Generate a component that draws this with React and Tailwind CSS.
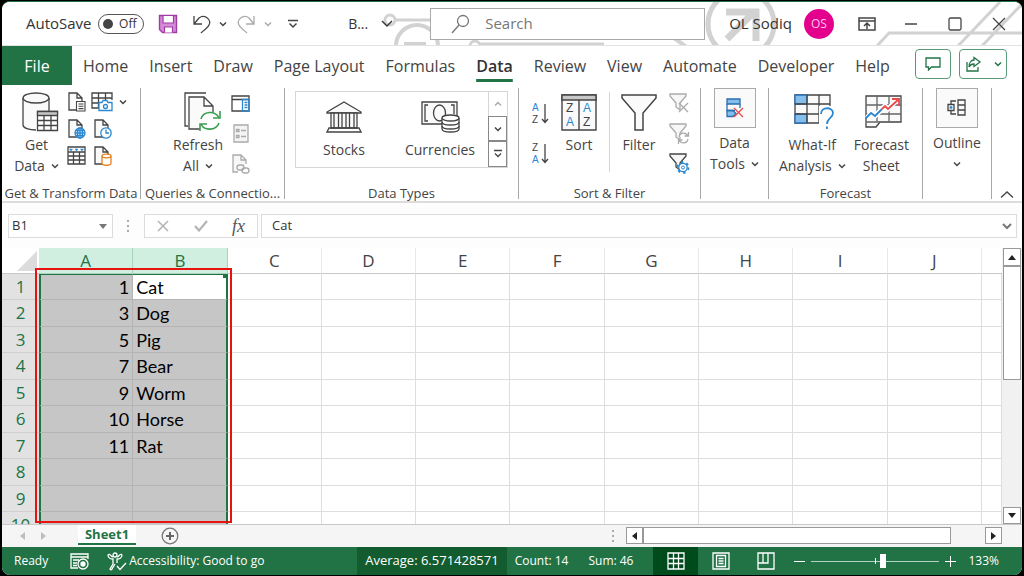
import React, { useState } from 'react';

const COLUMNS = ['A', 'B', 'C', 'D', 'E', 'F', 'G', 'H', 'I', 'J'];

const ROWS = [
  ['1', 'Cat'],
  ['3', 'Dog'],
  ['5', 'Pig'],
  ['7', 'Bear'],
  ['9', 'Worm'],
  ['10', 'Horse'],
  ['11', 'Rat'],
  ['', ''],
  ['', ''],
  ['', ''],
];

const TABS = ['Home', 'Insert', 'Draw', 'Page Layout', 'Formulas', 'Data', 'Review', 'View', 'Automate', 'Developer', 'Help'];

const Icon = ({ w, h, className = '', children }) => (
  <svg
    width={w}
    height={h}
    viewBox={`0 0 ${w} ${h}`}
    fill="none"
    stroke="#444"
    strokeWidth="1.3"
    className={`shrink-0 ${className}`}
    aria-hidden="true"
  >
    {children}
  </svg>
);

const Chevron = ({ color = '#444', className = '' }) => (
  <svg width="8" height="8" viewBox="0 0 8 8" fill="none" stroke={color} strokeWidth="1.5" className={`shrink-0 ${className}`} aria-hidden="true">
    <path d="M1 2.5l3 3 3-3" />
  </svg>
);

// small page outline shared by the import icons
const Page = () => <path d="M12 18H2V1h8l5 5v3M10 1v5h5" fill="#fafafa" />;

/* ---------- title bar ---------- */

const TitleArt = () => (
  <svg width="1020" height="43" viewBox="0 0 1020 43" fill="none" stroke="#d2d2d2" strokeWidth="3" className="absolute right-0 top-0" aria-hidden="true">
    <circle cx="388" cy="18" r="5" />
    <path d="M393 18h50" />
    <path d="M394 44a21 21 0 0 1 42 0M402 42h22" strokeWidth="4" />
    <path d="M468 44a5 5 0 0 1 10 0M478 42h124" />
    <path d="M672 36l14 10" strokeWidth="4" />
    <circle cx="739" cy="22" r="33" strokeWidth="5" />
    <path d="M725 37l27-27M724 10h30v29" strokeWidth="7" />
    <path d="M875 44l12-13h133M956 44l42-44M980 44l40-42" />
  </svg>
);

const TitleBar = () => {
  const [autoSave, setAutoSave] = useState(false);

  return (
    <header className="relative flex h-11 shrink-0 items-center overflow-hidden border-b border-[#e3e3e3] bg-white text-[15px] text-[#333]">
      <TitleArt />
      <div className="relative flex flex-1 items-center pl-6">
        <span id="autosave">AutoSave</span>
        <button
          role="switch"
          aria-checked={autoSave}
          aria-labelledby="autosave"
          onClick={() => setAutoSave(!autoSave)}
          className="ml-1.5 flex h-5 w-[46px] items-center justify-between rounded-full border border-[#555] pl-1 pr-1.5 text-[12px]"
        >
          <span className="size-2.5 rounded-full bg-[#444]" />
          {autoSave ? 'On' : 'Off'}
        </button>
        <button aria-label="Save" className="ml-3.5">
          <Icon w={20} h={20}>
            <path d="M1.500 1.500h17v17h-14l-3-3z" fill="#d58bd8" stroke="#a13ca6" strokeWidth="1.400" />
            <path d="M5 1.500h10.500v7.500H5zM6.500 18.500v-5.500h8v5.500" fill="#fff" stroke="#a13ca6" strokeWidth="1.200" />
          </Icon>
        </button>
        <button aria-label="Undo" className="ml-3.5 flex items-center gap-2">
          <Icon w={19} h={20}>
            <path d="M2 2v8h8M2 10l5-6c5-4 13 1 10 7-1 3-4 4-8 8" />
          </Icon>
          <Chevron />
        </button>
        <button aria-label="Redo" className="ml-2.5 flex items-center gap-2">
          <Icon w={19} h={20}>
            <path d="M17 2v8H9M17 10l-5-6C7 0-1 5 2 11c1 3 4 4 8 8" stroke="#aaa" />
          </Icon>
          <Chevron color="#aaa" />
        </button>
        <button aria-label="Customize Quick Access Toolbar" className="ml-4">
          <Icon w={10} h={10}>
            <path d="M0 1.500h10M1.500 4.500L5 8l3.500-3.500" strokeWidth="1.500" />
          </Icon>
        </button>
        <button className="ml-auto mr-9 flex items-center gap-3 text-[14px]">
          B...
          <Icon w={14} h={10}>
            <path d="M2 2l5 5 5-5" stroke="#333" strokeWidth="1.400" />
          </Icon>
        </button>
      </div>
      <label className="relative flex h-8 w-[275px] items-center border border-[#aaa] bg-white pl-5">
        <Icon w={20} h={20} className="mr-3.5">
          <circle cx="12" cy="7" r="5.500" stroke="#777" />
          <path d="M8 11l-7 8" stroke="#777" />
        </Icon>
        <input aria-label="Search" placeholder="Search" className="min-w-0 flex-1 bg-transparent outline-none placeholder:text-[#777]" />
      </label>
      <div className="relative flex items-center pl-6">
        <span className="whitespace-nowrap">OL Sodiq</span>
        <span className="ml-3 flex size-[30px] items-center justify-center rounded-full bg-[#e3008c] text-[12px] text-[#ffc4e8]">OS</span>
        <button aria-label="Ribbon Display Options" className="ml-6">
          <Icon w={18} h={14}>
            <path d="M1 1h16v12H1zM1 4h16M9 12V6M6 9l3-3 3 3" strokeWidth="1.500" />
          </Icon>
        </button>
        <button aria-label="Minimize" className="ml-7">
          <Icon w={14} h={14}>
            <path d="M1 7h12" />
          </Icon>
        </button>
        <button aria-label="Maximize" className="ml-[30px]">
          <Icon w={14} h={14}>
            <rect x="1" y="1" width="12" height="12" rx="1.500" />
          </Icon>
        </button>
        <button aria-label="Close" className="ml-[30px] mr-4">
          <Icon w={14} h={14}>
            <path d="M1 1l12 12M13 1L1 13" />
          </Icon>
        </button>
      </div>
    </header>
  );
};

/* ---------- tabs ---------- */

const TabBar = () => (
  <nav className="flex h-[39px] shrink-0 items-stretch bg-white text-[16px] text-[#444]">
    <button className="w-[70px] bg-[#217346] text-white">File</button>
    <div className="flex flex-1 gap-[21px] pl-[11px]">
      {TABS.map((tab) => (
        <button
          key={tab}
          className={
            tab === 'Data'
              ? 'flex flex-col justify-center whitespace-nowrap font-semibold text-[#333] underline decoration-[#217346] decoration-[3px] underline-offset-[7px]'
              : 'flex flex-col justify-center whitespace-nowrap'
          }
        >
          {tab}
        </button>
      ))}
    </div>
    <div className="flex items-center gap-2 pb-1 pr-[15px]">
      <button aria-label="Comments" className="flex h-[30px] w-9 items-center justify-center rounded border border-[#5b9a78]">
        <Icon w={16} h={14}>
          <path d="M1 1h14v9H6.500L3.500 13v-3H1z" stroke="#217346" />
        </Icon>
      </button>
      <button aria-label="Share" className="flex h-[30px] w-12 items-center justify-center gap-3 rounded border border-[#5b9a78]">
        <Icon w={17} h={16}>
          <path d="M2 6v9h11v-4M9 1.500l6 4.500-6 4.500V8C6.500 8 5 9 4 11c0-4 2-7 5-7z" stroke="#217346" />
        </Icon>
        <Chevron color="#217346" />
      </button>
    </div>
  </nav>
);

/* ---------- ribbon ---------- */

const Group = ({ label, className, children }) => (
  <section className={`flex shrink-0 flex-col border-r border-[#a8a8a8] ${className}`}>
    <div className="flex flex-1 items-start">{children}</div>
    <div className="h-3 whitespace-nowrap text-center text-[13px] leading-3">{label}</div>
  </section>
);

const BigButton = ({ icon, lines, menu, className = '' }) => (
  <button className={`flex flex-col items-center text-[14px] leading-[21px] ${className}`}>
    <span className="mb-0.5 flex h-10 items-center">{icon}</span>
    {lines.map((line, i) => (
      <span key={line} className="flex items-center gap-1.5 whitespace-nowrap">
        {line}
        {menu && i === lines.length - 1 && <Chevron />}
      </span>
    ))}
  </button>
);

const SmallButton = ({ label, children }) => (
  <button aria-label={label} className="flex h-[27px] items-center justify-center">
    {children}
  </button>
);

const GetDataIcon = () => (
  <Icon w={37} h={40} className="ml-2">
    <path d="M1 6v27c0 3 6 5 13 5V20h13V6z" fill="#fafafa" stroke="none" />
    <path d="M1 6v27c0 3 6 5 13 5M27 6v13" />
    <ellipse cx="14" cy="6" rx="13" ry="5" fill="#fafafa" />
    <path d="M15.500 19.500h20v19h-20z" fill="#fff" />
    <path d="M15.500 19.500h20v4h-20z" fill="#c8c8c8" />
    <path d="M15.500 28.500h20M15.500 33.500h20M22 24v15M29 24v15" />
  </Icon>
);

const RefreshIcon = () => (
  <Icon w={37} h={40} className="ml-2">
    <path d="M4 34H1V1h21" />
    <path d="M17 37H5V5h15l9 9v7M20 5v9h9" fill="#fafafa" />
    <path d="M16 20h20v19H16z" fill="#fff" stroke="none" />
    <g stroke="#3a9e50" strokeWidth="1.600">
      <path d="M17 27c2-8 14-9 18-1M35 31c-3 8-15 8-18 1" />
      <path d="M36 19v7h-7M16 39v-7h7" />
    </g>
  </Icon>
);

const TransformGroup = () => (
  <Group label="Get & Transform Data" className="w-[139px]">
    <BigButton icon={<GetDataIcon />} lines={['Get', 'Data']} menu className="ml-3 mt-1" />
    <div className="ml-2 grid grid-cols-[18px_22px_8px] gap-x-1.5">
      <SmallButton label="From Text/CSV">
        <Icon w={19} h={20}>
          <Page />
          <path d="M9.500 9.500h8.500v9.500H9.500zM11.500 12h5M11.500 14.300h5M11.500 16.600h5" fill="#fff" strokeWidth="1.100" />
        </Icon>
      </SmallButton>
      <SmallButton label="From Picture">
        <Icon w={22} h={20}>
          <path d="M8 16H1V1h20v7M1 6h20M1 11h7M7.500 1v15M14.500 1v7" />
          <path d="M8 10.500h3l1-2h4l1 2h4v8H8z" fill="#fff" stroke="#2b88d0" />
          <circle cx="14.500" cy="14.500" r="2" stroke="#2b88d0" />
        </Icon>
      </SmallButton>
      <SmallButton label="Picture options">
        <Chevron />
      </SmallButton>
      <SmallButton label="From Web">
        <Icon w={19} h={20}>
          <Page />
          <g stroke="#2b88d0">
            <circle cx="13" cy="14" r="5" fill="#fff" />
            <path d="M8 14h10M13 9v10M9 11.500h8M9 16.500h8" />
            <ellipse cx="13" cy="14" rx="2.500" ry="5" />
          </g>
        </Icon>
      </SmallButton>
      <SmallButton label="Recent Sources">
        <Icon w={19} h={20}>
          <Page />
          <circle cx="13" cy="14" r="5.200" fill="#fff" stroke="#2b88d0" />
          <path d="M13 10.500V14h3" stroke="#2b88d0" />
        </Icon>
      </SmallButton>
      <span />
      <SmallButton label="From Table/Range">
        <Icon w={19} h={19}>
          <path d="M1 1h17v17H1zM1 6h17M1 10h17M1 14h17M6.500 6v12M12.500 6v12" />
          <path d="M2.500 3h3l-1.500 2zM8 3h3L9.500 5zM13.500 3h3L15 5z" fill="#2b88d0" stroke="#2b88d0" strokeWidth=".5" />
        </Icon>
      </SmallButton>
      <SmallButton label="Existing Connections">
        <Icon w={19} h={20}>
          <Page />
          <path d="M9 10v7c0 3 9 3 9 0v-7" fill="#fff" stroke="#e8801c" />
          <ellipse cx="13.500" cy="10" rx="4.500" ry="1.800" fill="#fff" stroke="#e8801c" />
        </Icon>
      </SmallButton>
    </div>
  </Group>
);

const QueriesGroup = () => (
  <Group label="Queries & Connectio..." className="w-[144px]">
    <BigButton icon={<RefreshIcon />} lines={['Refresh', 'All']} menu className="ml-8 mt-1" />
    <div className="ml-2 mt-0.5 flex flex-col gap-[3px]">
      <SmallButton label="Queries & Connections">
        <Icon w={19} h={17}>
          <path d="M1 1h17v15H1zM1 4.500h17" />
          <path d="M11.500 4.500H18V16h-6.500zM13.500 7.500h3M13.500 10h3M13.500 12.500h3" stroke="#2b88d0" />
        </Icon>
      </SmallButton>
      <SmallButton label="Properties">
        <Icon w={16} h={19}>
          <path d="M1 1h14v17H1zM3.500 5.500h2.500v2H3.500zM3.500 11.500h2.500v2H3.500zM8 6.500h5M8 12.500h5" fill="#f4f4f4" stroke="#aaa" />
        </Icon>
      </SmallButton>
      <SmallButton label="Edit Links">
        <Icon w={19} h={20}>
          <path d="M7 18H2V1h8l5 5v4M10 1v5h5" fill="#f7f7f7" stroke="#aaa" />
          <rect x="6" y="11" width="7" height="5" rx="2.500" stroke="#aaa" />
          <rect x="11" y="14" width="7" height="5" rx="2.500" stroke="#aaa" />
        </Icon>
      </SmallButton>
    </div>
  </Group>
);

const TypesGroup = () => (
  <Group label="Data Types" className="w-[234px]">
    <div className="ml-2.5 mt-[3px] flex h-[77px] w-[213px] border border-[#d6d6d6]">
      <div className="flex flex-1 items-center justify-around pb-0.5">
        <BigButton
          icon={
            <Icon w={36} h={32}>
              <path d="M1 11L18 1l17 10v1H1z" fill="#fafafa" />
              <path d="M5 12h26v15H5z" fill="#fafafa" />
              <path d="M8 12v15M12.500 12v15M16 12v15M20 12v15M23.500 12v15M28 12v15M3 27h30l2 4H1z" />
            </Icon>
          }
          lines={['Stocks']}
          className="w-20"
        />
        <BigButton
          icon={
            <Icon w={39} h={34}>
              <path d="M1 2h35v22H1z" fill="#fafafa" />
              <path d="M7 5H4v16h3M30 5h3v9" />
              <ellipse cx="18.500" cy="13" rx="6" ry="8" />
              <path d="M21 18v11c0 4 17 4 17 0V18" fill="#fff" />
              <path d="M21 22c0 4 17 4 17 0M21 26c0 4 17 4 17 0" />
              <ellipse cx="29.500" cy="18" rx="8.500" ry="3" fill="#fff" />
            </Icon>
          }
          lines={['Currencies']}
          className="w-20"
        />
      </div>
      <div className="flex w-[19px] flex-col">
        <button aria-label="Previous row" className="flex flex-1 items-center justify-center border-l border-[#d6d6d6]">
          <Chevron color="#aaa" className="rotate-180" />
        </button>
        <button aria-label="Next row" className="flex flex-1 items-center justify-center border border-[#888]">
          <Chevron />
        </button>
        <button aria-label="More data types" className="flex flex-1 items-center justify-center border border-[#888]">
          <Icon w={10} h={10}>
            <path d="M1 1.500h8M2 4.500l3 3 3-3" />
          </Icon>
        </button>
      </div>
    </div>
  </Group>
);

const SortLetters = ({ top, bottom, topColor, bottomColor }) => (
  <svg width="19" height="24" viewBox="0 0 19 24" fontFamily="Liberation Sans, sans-serif" fontSize="10" className="overflow-visible" aria-hidden="true">
    <text x="1" y="9" fill={topColor}>{top}</text>
    <text x="1" y="21" fill={bottomColor}>{bottom}</text>
    <path d="M14 2v18M11 17l3 3.500 3-3.500" fill="none" stroke="#444" strokeWidth="1.300" />
  </svg>
);

const Funnel = () => <path d="M1 1h16v2l-6 7v7l-4-3v-4L1 3z" fill="#f7f7f7" />;

const SortGroup = () => (
  <Group label="Sort & Filter" className="w-[182px]">
    <div className="ml-3 mt-3.5 flex flex-col gap-4">
      <button aria-label="Sort A to Z">
        <SortLetters top="A" bottom="Z" topColor="#2b88d0" bottomColor="#444" />
      </button>
      <button aria-label="Sort Z to A">
        <SortLetters top="Z" bottom="A" topColor="#444" bottomColor="#2b88d0" />
      </button>
    </div>
    <BigButton
      icon={
        <svg width="36" height="37" viewBox="0 0 36 37" fontFamily="Liberation Sans, sans-serif" fontSize="12" fill="none" stroke="#444" strokeWidth="1.400" aria-hidden="true">
          <path d="M1 1h34v35H1z" fill="#fafafa" />
          <path d="M1 1h34v5H1z" fill="#c8c8c8" />
          <path d="M18 6v30" />
          <g stroke="none">
            <text x="5" y="18" fill="#444">Z</text>
            <text x="5" y="32" fill="#2b88d0">A</text>
            <text x="22" y="18" fill="#2b88d0">A</text>
            <text x="22" y="32" fill="#444">Z</text>
          </g>
        </svg>
      }
      lines={['Sort']}
      className="ml-[11px] mt-1"
    />
    <div className="ml-3 mt-1 h-20 w-px bg-[#d6d6d6]" />
    <BigButton
      icon={
        <Icon w={36} h={37}>
          <path d="M1 1h34v3L22 19v17h-8V19L1 4z" fill="#fafafa" strokeWidth="1.500" />
        </Icon>
      }
      lines={['Filter']}
      className="ml-[11px] mt-1"
    />
    <div className="ml-3 mt-0.5 flex flex-col gap-[3px]">
      <SmallButton label="Clear">
        <Icon w={21} h={21}>
          <g stroke="#aaa">
            <Funnel />
            <path d="M10 10l9 9M19 10l-9 9" />
          </g>
        </Icon>
      </SmallButton>
      <SmallButton label="Reapply">
        <Icon w={21} h={21}>
          <g stroke="#aaa">
            <Funnel />
            <path d="M10 14c1-5 7-5 9-1M19 16c-1 5-7 5-9 1M19.500 9v4h-4M9.500 21v-4h4" fill="#fff" />
          </g>
        </Icon>
      </SmallButton>
      <SmallButton label="Advanced">
        <Icon w={21} h={21}>
          <Funnel />
          <circle cx="14" cy="14.500" r="4.200" fill="#fff" stroke="#2b88d0" />
          <circle cx="14" cy="14.500" r="5.500" stroke="#2b88d0" strokeWidth="1.800" strokeDasharray="2.400 3.360" />
          <circle cx="14" cy="14.500" r="1.500" stroke="#2b88d0" strokeWidth="1" />
        </Icon>
      </SmallButton>
    </div>
  </Group>
);

const BoxedButton = ({ icon, children }) => (
  <button className="flex w-full flex-col items-center text-[14px] leading-[21px]">
    <span className="mb-1 flex h-10 w-[42px] items-center justify-center border border-[#aaa] bg-[#fafafa]">{icon}</span>
    {children}
  </button>
);

const Ribbon = () => (
  <div className="flex h-[118px] shrink-0 border-b-2 border-[#dcdcdc] bg-white pb-0.5 pt-[3px] text-[#444]">
    <TransformGroup />
    <QueriesGroup />
    <TypesGroup />
    <SortGroup />
    <Group label="" className="w-[68px]">
      <BoxedButton
        icon={
          <Icon w={18} h={20}>
            <path d="M1 1h13v5H1zM1 12.500h6l3 3-3 3H1z" fill="#83beec" stroke="#2b6fb0" />
            <path d="M1 6v6.500h8M14 6v4" stroke="#2b6fb0" />
            <path d="M8 10l9 9M17 10l-9 9" stroke="#e84a4a" />
          </Icon>
        }
      >
        <span>Data</span>
        <span className="flex items-center gap-1.5">
          Tools <Chevron />
        </span>
      </BoxedButton>
    </Group>
    <Group label="Forecast" className="w-[154px]">
      <BigButton
        icon={
          <Icon w={40} h={36} className="ml-1">
            <path d="M1 1h35v28H1z" fill="#fafafa" />
            <path d="M1 1h12v9H1zM1 20h12v9H1z" fill="#83beec" stroke="#2b6fb0" />
            <path d="M13 1v28M25 1v28M1 10h35M1 20h35" />
            <path d="M25 12h15v24H25z" fill="#fff" stroke="none" />
            <path d="M27 20c0-8 12-7 12-1 0 5-6 5-6 11M33 32.500v2.500" stroke="#2b88d0" strokeWidth="1.800" />
          </Icon>
        }
        lines={['What-If', 'Analysis']}
        menu
        className="ml-2.5 mt-1"
      />
      <BigButton
        icon={
          <Icon w={37} h={34} className="ml-1">
            <path d="M1 1h35v26H15l-4 5H1z" fill="#fafafa" />
            <path d="M1 27h14M1 10h35M1 19h35M12 1v26M24 1v26" stroke="#666" />
            <path d="M2 23l4-5 4 3 7-7M17 14l3-3 3 3 10-10" stroke="#fff" strokeWidth="5" />
            <path d="M1 23l5-5 4 3 7-7" stroke="#2b88d0" strokeWidth="1.800" />
            <path d="M17 14l3-3 3 3L34 4M27 4h7v7" stroke="#e84a4a" strokeWidth="1.800" />
          </Icon>
        }
        lines={['Forecast', 'Sheet']}
        className="ml-2 mt-1"
      />
    </Group>
    <Group label="" className="w-[69px]">
      <BoxedButton
        icon={
          <Icon w={20} h={18}>
            <path d="M11 1h7v15h-7zM11 6h7M11 11h7M9 2H4v3M9 15H4v-3" />
            <path d="M1 5.500h6v6H1z" />
            <path d="M4 7v3M2.500 8.500h3" stroke="#2b88d0" />
          </Icon>
        }
      >
        <span>Outline</span>
        <span className="flex h-[21px] items-center">
          <Chevron />
        </span>
      </BoxedButton>
    </Group>
    <div className="flex flex-1 items-end justify-center">
      <button aria-label="Collapse the Ribbon">
        <Icon w={14} h={9}>
          <path d="M1 7.500L7 2l6 5.500" />
        </Icon>
      </button>
    </div>
  </div>
);

/* ---------- formula bar ---------- */

const FormulaBar = () => (
  <div className="flex h-[45px] shrink-0 items-center bg-[#fdfdfd] pl-1.5 pr-[5px] text-[13px] text-[#333]">
    <div className="relative">
      <select aria-label="Name Box" className="h-6 w-[105px] appearance-none border border-[#dcdcdc] bg-white pl-[3px] outline-none">
        <option>B1</option>
      </select>
      <svg width="8" height="5" viewBox="0 0 8 5" className="pointer-events-none absolute right-1.5 top-2.5" aria-hidden="true">
        <path d="M0 0h8L4 5z" fill="#777" />
      </svg>
    </div>
    <svg width="3" height="14" viewBox="0 0 3 14" className="mx-3.5" fill="#aaa" aria-hidden="true">
      <path d="M0 1h2v2H0zM0 6h2v2H0zM0 11h2v2H0z" />
    </svg>
    <div className="flex h-6 w-[114px] items-center justify-between border border-[#dcdcdc] bg-white px-3">
      <button aria-label="Cancel">
        <Icon w={12} h={12}>
          <path d="M1 1l10 10M11 1L1 11" stroke="#b5b5b5" strokeWidth="1.600" />
        </Icon>
      </button>
      <button aria-label="Enter">
        <Icon w={14} h={12}>
          <path d="M1 6l4 4.500L13 1" stroke="#b5b5b5" strokeWidth="2.200" />
        </Icon>
      </button>
      <button aria-label="Insert Function" className="font-['Liberation_Serif',serif] text-[18px] italic leading-5 text-[#555]">
        fx
      </button>
    </div>
    <div className="ml-[3px] flex h-6 flex-1 items-center border border-[#dcdcdc] bg-white pr-1">
      <input aria-label="Formula Bar" defaultValue="Cat" className="min-w-0 flex-1 bg-transparent pl-2.5 outline-none" />
      <button aria-label="Expand Formula Bar">
        <Icon w={10} h={8}>
          <path d="M1 2l4 4 4-4" stroke="#777" strokeWidth="2" />
        </Icon>
      </button>
    </div>
  </div>
);

/* ---------- sheet ---------- */

const cellClass = (row, col) => {
  if (col === 0) {
    return row === 0
      ? 'border-b border-r border-l-2 border-t border-[#b4b4b4] border-l-[#217346] border-t-[#217346] bg-[#c6c6c6] pr-[3px] text-right'
      : 'border-b border-r border-l-2 border-[#b4b4b4] border-l-[#217346] bg-[#c6c6c6] pr-[3px] text-right';
  }
  if (col === 1) {
    return row === 0
      ? 'relative border-b border-r-2 border-t border-[#b4b4b4] border-r-[#217346] border-t-[#217346] bg-white pl-[3px]'
      : 'border-b border-r-2 border-[#b4b4b4] border-r-[#217346] bg-[#c6c6c6] pl-[3px]';
  }
  return 'border-b border-r border-[#dedede]';
};

const Sheet = () => (
  <div className="flex min-h-0 flex-1 bg-white">
    <div className="relative min-w-0 flex-1 overflow-hidden">
      <table className="w-full table-fixed border-separate border-spacing-0">
        <colgroup>
          <col className="w-[37px]" />
          {COLUMNS.map((c) => (
            <col key={c} />
          ))}
          <col className="w-5" />
        </colgroup>
        <thead className="text-[17px] leading-6">
          <tr className="h-[26px]">
            <th aria-label="Select all" className="border-b border-[#c8c8c8] p-0">
              <svg width="20" height="20" viewBox="0 0 20 20" className="ml-auto mr-0.5" aria-hidden="true">
                <path d="M20 0v20H0z" fill="#dcdcdc" />
              </svg>
            </th>
            {COLUMNS.map((c, i) => (
              <th
                key={c}
                className={
                  i < 2
                    ? 'border-b border-r border-[#a9d3bd] bg-[#d0efe0] p-0 font-normal text-[#217346]'
                    : 'border-b border-r border-b-[#c8c8c8] border-r-[#e8e8e8] p-0 font-normal text-[#444]'
                }
              >
                {c}
              </th>
            ))}
            <th className="border-b border-[#c8c8c8] p-0" />
          </tr>
        </thead>
        <tbody className="font-[Lato,sans-serif] text-[18px] leading-6 text-black">
          {ROWS.map((row, r) => (
            <tr key={r} className="odd:h-[26px] even:h-[27px]">
              <th className="border-b border-[#cfcfcf] bg-[#e2e2e2] p-0 font-['Open_Sans',sans-serif] text-[17px] font-normal text-[#217346]">
                {r + 1}
              </th>
              {COLUMNS.map((c, i) => (
                <td key={c} className={`p-0 ${cellClass(r, i)}`}>
                  {row[i]}
                  {r === 0 && i === 1 && <span className="absolute right-0 top-0 size-[3px] bg-[#217346]" />}
                </td>
              ))}
              <td className="border-b border-r border-[#dedede] p-0" />
            </tr>
          ))}
        </tbody>
      </table>
      {/* highlight around the selected columns */}
      <div className="pointer-events-none absolute bottom-px left-[33px] top-5 w-[197px] border-2 border-[#e8120f]" />
    </div>
    <div className="flex w-5 shrink-0 flex-col bg-[#f1f1f1] px-px">
      <button aria-label="Scroll up" className="flex h-[18px] items-center justify-center border border-[#999] bg-white">
        <svg width="8" height="5" viewBox="0 0 8 5" aria-hidden="true">
          <path d="M0 5h8L4 0z" fill="#222" />
        </svg>
      </button>
      <div className="h-[114px] border border-[#999] bg-white" />
      <button aria-label="Scroll down" className="mt-auto flex h-[17px] items-center justify-center border border-[#999] bg-white">
        <svg width="8" height="5" viewBox="0 0 8 5" aria-hidden="true">
          <path d="M0 0h8L4 5z" fill="#222" />
        </svg>
      </button>
    </div>
  </div>
);

const SheetTabs = () => (
  <div className="flex h-[23px] shrink-0 items-start border-t border-[#c8c8c8] bg-[#f5f5f5]">
    <div className="flex h-[21px] items-center gap-4 pl-[18px]">
      <button aria-label="Previous sheet">
        <svg width="5" height="8" viewBox="0 0 5 8" aria-hidden="true">
          <path d="M5 0v8L0 4z" fill="#bdbdbd" />
        </svg>
      </button>
      <button aria-label="Next sheet">
        <svg width="5" height="8" viewBox="0 0 5 8" aria-hidden="true">
          <path d="M0 0v8l5-4z" fill="#bdbdbd" />
        </svg>
      </button>
    </div>
    <button className="ml-8 h-5 w-[58px] border-b-2 border-[#217346] bg-white text-[13px] font-bold leading-[18px] text-[#217346]">Sheet1</button>
    <button aria-label="New sheet" className="ml-[25px] mt-0.5">
      <Icon w={18} h={18}>
        <circle cx="9" cy="9" r="7.800" stroke="#777" />
        <path d="M9 5v8M5 9h8" stroke="#666" strokeWidth="2" />
      </Icon>
    </button>
    <div className="ml-auto flex w-[410px] items-center pt-0.5">
      <svg width="2" height="12" viewBox="0 0 2 12" className="mr-3" fill="#aaa" aria-hidden="true">
        <path d="M0 0h2v2H0zM0 5h2v2H0zM0 10h2v2H0z" />
      </svg>
      <button aria-label="Scroll left" className="flex h-[17px] w-[17px] items-center justify-center border border-[#999] bg-white">
        <svg width="5" height="8" viewBox="0 0 5 8" aria-hidden="true">
          <path d="M5 0v8L0 4z" fill="#222" />
        </svg>
      </button>
      <div className="h-[17px] w-[308px] border border-[#999] bg-white" />
      <button aria-label="Scroll right" className="ml-auto mr-5 flex h-[17px] w-[17px] items-center justify-center border border-[#999] bg-white">
        <svg width="5" height="8" viewBox="0 0 5 8" aria-hidden="true">
          <path d="M0 0v8l5-4z" fill="#222" />
        </svg>
      </button>
    </div>
  </div>
);

/* ---------- status bar ---------- */

const StatusBar = () => {
  const [zoom, setZoom] = useState(56);

  return (
    <footer className="flex h-7 shrink-0 items-center whitespace-nowrap bg-[#217346] text-[12px] text-white">
      <span className="pl-3">Ready</span>
      <button aria-label="Macro recording" className="ml-[22px]">
        <Icon w={19} h={17}>
          <g stroke="#fff">
            <path d="M8 15H1V1h17v5M1 4h17M3 7h6M3 10h4M3 12.500h4" />
            <circle cx="13" cy="11" r="5" />
            <circle cx="13" cy="11" r="2" fill="#fff" />
          </g>
        </Icon>
      </button>
      <button className="ml-[18px] flex items-center gap-0.5">
        <Icon w={20} h={19}>
          <g stroke="#fff">
            <circle cx="8" cy="3" r="2" />
            <path d="M1 3c0 3 3 4 5 4v5l-3 5c0 1 2 1 2 0l3-5M15 3c0 3-3 4-5 4v4M10 14l3 3.500L19 11" />
            <path d="M1 3c1-2 3 1 5 2M15 3c-1-2-3 1-5 2" />
          </g>
        </Icon>
        Accessibility: Good to go
      </button>
      <div className="ml-auto flex h-full items-center">
        <span className="flex h-full items-center bg-[#125c30] px-2 text-[13px]">Average: 6.571428571</span>
        <span className="px-2">Count: 14</span>
        <span className="pl-3 pr-5">Sum: 46</span>
        <button aria-label="Normal" className="flex h-full w-[45px] items-center justify-center bg-[#004b1c]">
          <Icon w={18} h={18}>
            <path d="M1 1h16v16H1zM6.500 1v16M11.500 1v16M1 6.500h16M1 11.500h16" stroke="#fff" />
          </Icon>
        </button>
        <button aria-label="Page Layout" className="flex h-full w-[45px] items-center justify-center">
          <Icon w={18} h={18}>
            <path d="M1 1h16v16H1zM4.500 3.500h9v11h-9zM6.500 6.500h5M6.500 9h5M6.500 11.500h5" stroke="#fff" />
          </Icon>
        </button>
        <button aria-label="Page Break Preview" className="flex h-full w-[45px] items-center justify-center">
          <Icon w={18} h={18}>
            <path d="M1 1h16v16H1zM1 11h10V1M6 1v10" stroke="#fff" />
          </Icon>
        </button>
        <button aria-label="Zoom Out" className="ml-1.5">
          <Icon w={11} h={11}>
            <path d="M0 5.500h11" stroke="#fff" strokeWidth="1" />
          </Icon>
        </button>
        <div className="relative ml-1.5 flex h-full w-32 items-center">
          <span className="absolute left-1/2 h-1.5 w-px bg-white" />
          <input
            type="range"
            aria-label="Zoom"
            value={zoom}
            onChange={(e) => setZoom(Number(e.target.value))}
            className="h-px w-full appearance-none bg-[#b5d3c2] outline-none [&::-webkit-slider-thumb]:h-3.5 [&::-webkit-slider-thumb]:w-1.5 [&::-webkit-slider-thumb]:appearance-none [&::-webkit-slider-thumb]:bg-white"
          />
        </div>
        <button aria-label="Zoom In" className="ml-1.5">
          <Icon w={11} h={11}>
            <path d="M0 5.500h11M5.500 0v11" stroke="#fff" strokeWidth="1" />
          </Icon>
        </button>
        <span className="ml-3 pr-[23px]">133%</span>
      </div>
    </footer>
  );
};

const App = () => (
  <div className="h-screen bg-black pb-px pl-0.5 pr-0.5 pt-px font-['Open_Sans',sans-serif]">
    <div className="flex h-full flex-col overflow-hidden rounded-lg border-t border-[#217346] bg-white">
      <TitleBar />
      <TabBar />
      <Ribbon />
      <FormulaBar />
      <Sheet />
      <SheetTabs />
      <StatusBar />
    </div>
  </div>
);

export default App;
